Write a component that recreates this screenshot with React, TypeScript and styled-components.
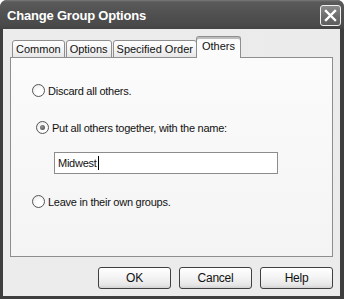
import * as React from 'react';
import styled, { createGlobalStyle } from 'styled-components';

const GlobalStyle = createGlobalStyle`
    html, body {
        margin: 0;
        padding: 0;
        background: #ffffff;
    }
    body {
        font-family: 'Liberation Sans', Arial, sans-serif;
        font-size: 11px;
        letter-spacing: -0.25px;
        color: #000;
    }
`;

const TABS = ['Common', 'Options', 'Specified Order', 'Others'];
const ACTIVE_TAB = 'Others';

const RadioOption: React.FC<{ checked?: boolean; label: string; indent?: number; top: number }> = ({
    checked,
    label,
    indent = 0,
    top,
}) => (
    <OptionRow $indent={indent} $top={top}>
        <RadioCircle>{checked && <RadioDot />}</RadioCircle>
        <OptionLabel>{label}</OptionLabel>
    </OptionRow>
);

const App: React.FC = () => (
    <>
        <GlobalStyle />
        <Window>
            <TitleBar>
                <Title>Change Group Options</Title>
                <CloseButton>
                    <svg width="13" height="13" viewBox="0 0 13 13">
                        <path d="M2 2 L11 11 M11 2 L2 11" stroke="#fff" strokeWidth="2.4" strokeLinecap="square" />
                    </svg>
                </CloseButton>
            </TitleBar>
            <Body>
                <TabRow>
                    {TABS.map((tab) => (
                        <Tab key={tab} $active={tab === ACTIVE_TAB}>
                            {tab}
                        </Tab>
                    ))}
                </TabRow>
                <Panel>
                    <RadioOption label="Discard all others." top={26} />
                    <RadioOption checked label="Put all others together, with the name:" indent={4} top={24} />
                    <NameInput>
                        Midwest
                        <Caret />
                    </NameInput>
                    <RadioOption label="Leave in their own groups." top={21} />
                </Panel>
                <ButtonRow>
                    <DialogButton>OK</DialogButton>
                    <DialogButton>Cancel</DialogButton>
                    <DialogButton>Help</DialogButton>
                </ButtonRow>
            </Body>
        </Window>
    </>
);

const Window = styled.div`
    width: 344px;
    height: 299px;
    box-sizing: border-box;
    display: flex;
    flex-direction: column;
    background: #3e3e3e;
    border-radius: 7px 7px 0 0;
    overflow: hidden;
`;

const TitleBar = styled.div`
    height: 29px;
    flex: none;
    display: flex;
    align-items: center;
    justify-content: space-between;
    padding: 0 3px 0 7px;
    background: linear-gradient(#7a7a7a 0, #5a5a5a 2px, #525252 40%, #4a4a4a 85%, #444 100%);
`;

const Title = styled.div`
    color: #fff;
    font-family: 'Liberation Sans', Arial, sans-serif;
    font-weight: bold;
    font-size: 13px;
    letter-spacing: -0.2px;
    margin-top: 1px;
`;

const CloseButton = styled.div`
    width: 19px;
    height: 19px;
    display: flex;
    align-items: center;
    justify-content: center;
    border: 1px solid #f0f0f0;
    border-radius: 3px;
    background: linear-gradient(#8a8a8a, #6a6a6a 60%, #5e5e5e);
    margin-top: 1px;
`;

const Body = styled.div`
    flex: 1;
    margin: 0 4px 3px 3px;
    padding: 7px 7px 0 7px;
    background: linear-gradient(90deg, #ececec, #ebebeb);
    display: flex;
    flex-direction: column;
`;

const TabRow = styled.div`
    display: flex;
    align-items: flex-end;
    gap: 1px;
    height: 22px;
    padding-left: 2px;
    margin-bottom: -1px;
    position: relative;
    z-index: 1;
`;

const Tab = styled.div<{ $active: boolean }>`
    height: ${(p) => (p.$active ? 22 : 18)}px;
    box-sizing: border-box;
    margin: 0 ${(p) => (p.$active ? -2 : 0)}px;
    padding: ${(p) => (p.$active ? '3px 5px 0' : '2px 3px 0')};
    border: 1px solid #8e8e8e;
    border-bottom: ${(p) => (p.$active ? 'none' : '1px solid #8e8e8e')};
    border-radius: 3px 3px 0 0;
    background: ${(p) => (p.$active ? '#fbfbfb' : 'linear-gradient(#ffffff, #f0f0f0 70%, #e6e6e6)')};
    box-shadow: ${(p) => (p.$active ? 'inset 0 2px 0 #bdbdbd' : 'none')};
    color: #111;
    font-size: 11px;
    letter-spacing: 0;
    white-space: nowrap;
    position: relative;
    z-index: ${(p) => (p.$active ? 2 : 1)};
`;

const Panel = styled.div`
    height: 200px;
    box-sizing: border-box;
    border: 1px solid #8e8e8e;
    background: linear-gradient(#fbfbfb, #f4f4f4);
    padding-left: 21px;
    display: flex;
    flex-direction: column;
    align-items: flex-start;
`;

const OptionRow = styled.div<{ $indent: number; $top: number }>`
    display: flex;
    align-items: center;
    gap: 3px;
    margin-left: ${(p) => p.$indent}px;
    margin-top: ${(p) => p.$top}px;
    height: 13px;
`;

const RadioCircle = styled.div`
    width: 13px;
    height: 13px;
    box-sizing: border-box;
    border-radius: 50%;
    border: 1px solid #555;
    background: radial-gradient(circle at 60% 65%, #ffffff 30%, #e4e4e4 100%);
    display: flex;
    align-items: center;
    justify-content: center;
`;

const RadioDot = styled.div`
    width: 5px;
    height: 5px;
    border-radius: 50%;
    background: radial-gradient(circle at 40% 40%, #9a9a9a, #3a3a3a);
`;

const OptionLabel = styled.span`
    color: #111;
    white-space: nowrap;
`;

const NameInput = styled.div`
    width: 224px;
    height: 22px;
    box-sizing: border-box;
    margin: 18px 0 0 22px;
    border: 1px solid #8c8c8c;
    background: #fff;
    padding: 0 3px;
    display: flex;
    align-items: center;
    color: #111;
`;

const Caret = styled.span`
    width: 1px;
    height: 14px;
    background: #000;
    margin-left: 1px;
`;

const ButtonRow = styled.div`
    display: flex;
    justify-content: flex-end;
    gap: 8px;
    margin-top: 10px;
`;

const DialogButton = styled.div`
    width: 73px;
    height: 22px;
    box-sizing: border-box;
    border: 1px solid #404040;
    border-radius: 3px;
    background: linear-gradient(#ffffff, #f3f3f3 50%, #e6e6e6 85%, #d2d2d2);
    display: flex;
    align-items: center;
    justify-content: center;
    color: #111;
    font-size: 12px;
`;

export default App;
